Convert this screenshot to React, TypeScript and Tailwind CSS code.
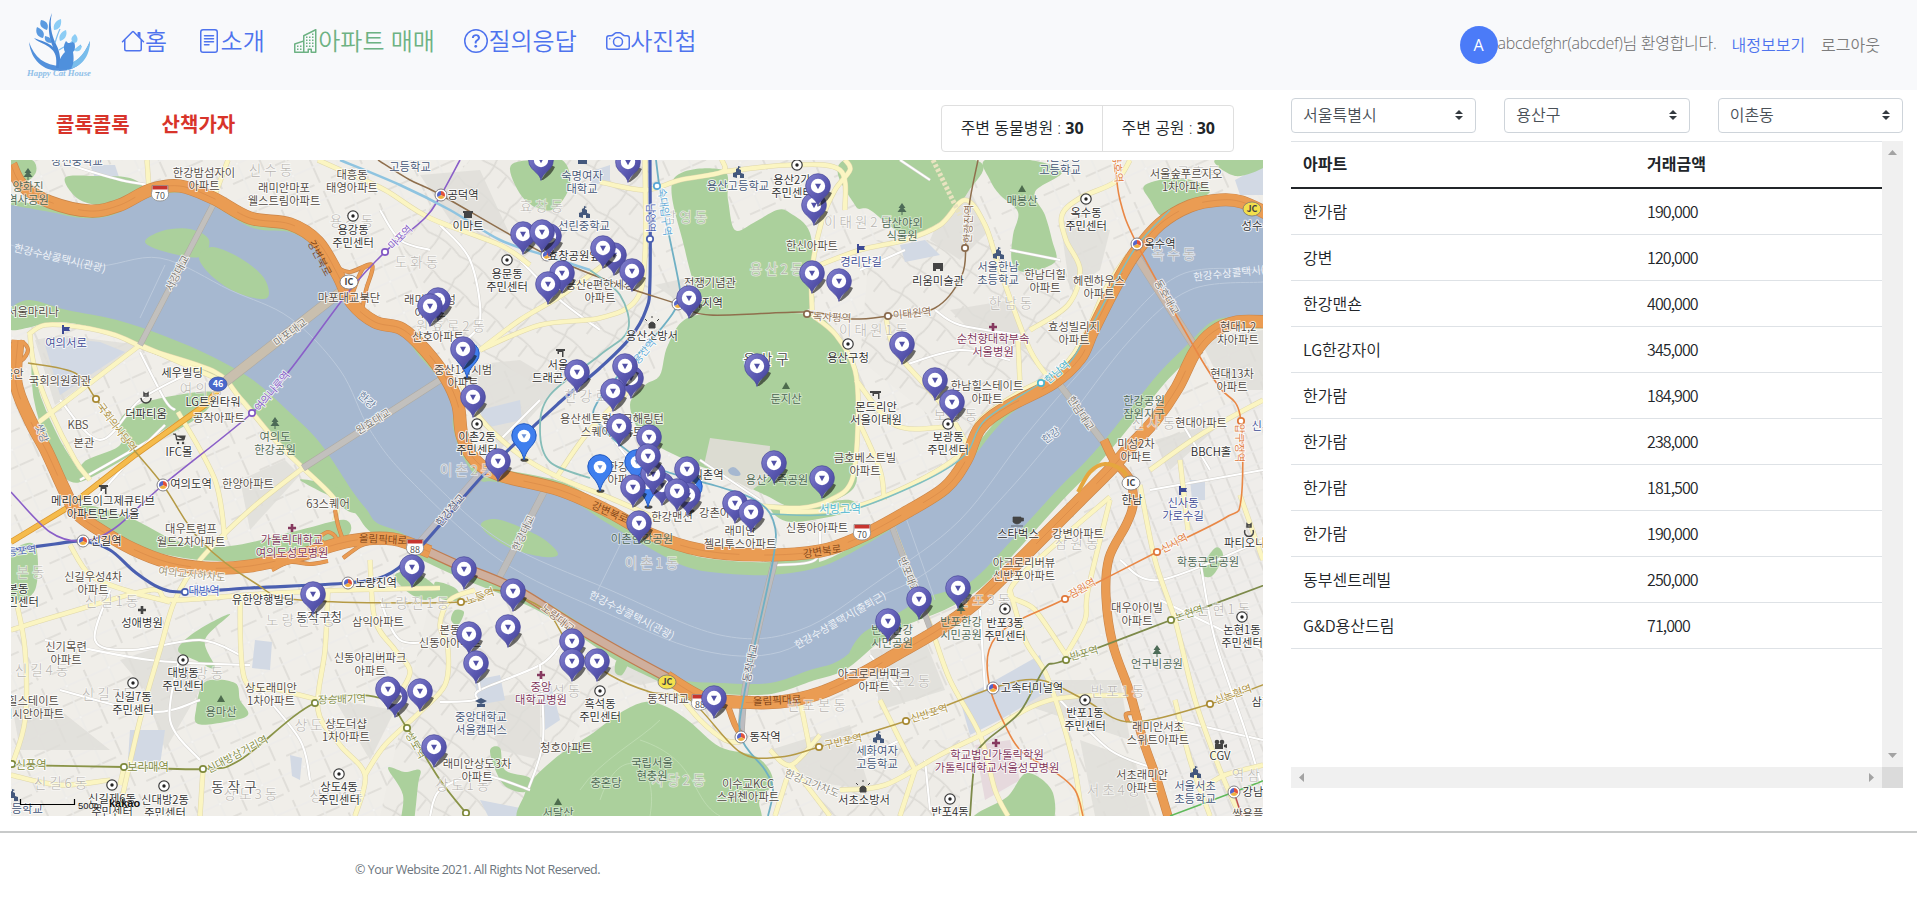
import React from "react";
import { BsFileText, BsQuestionCircle, BsCamera } from "react-icons/bs";

type Pt = [number, number];

const pts = (s: string): Pt[] => s.trim().split(/\s+/).map((p) => p.split(",").map(Number) as Pt);

// Catmull-Rom spline through the listed points
function curve(s: string, closed = false): string {
  const p = pts(s);
  const n = p.length;
  const at = (i: number): Pt => (closed ? p[(i + n) % n] : p[Math.max(0, Math.min(n - 1, i))]);
  let d = `M${p[0][0]},${p[0][1]}`;
  for (let i = 0; i < (closed ? n : n - 1); i++) {
    const [a, b, c, e] = [at(i - 1), at(i), at(i + 1), at(i + 2)];
    d += `C${(b[0] + (c[0] - a[0]) / 6).toFixed(1)},${(b[1] + (c[1] - a[1]) / 6).toFixed(1)} ${(c[0] - (e[0] - b[0]) / 6).toFixed(1)},${(c[1] - (e[1] - b[1]) / 6).toFixed(1)} ${c[0]},${c[1]}`;
  }
  return closed ? d + "Z" : d;
}

const NORTH_BANK =
  "11,205 50,212 83,218 113,215 150,197 187,193 213,205 253,228 293,233 320,253 337,283 353,310 373,327 400,333 420,357 440,380 453,403 453,427 463,457 480,480 497,482 560,495 607,523 653,550 687,567 720,573 770,575 820,567 860,548 907,519 950,492 973,458 1007,417 1047,390 1073,367 1093,337 1117,290 1137,257 1160,227 1193,207 1227,200 1270,217";
const SOUTH_BANK =
  "1270,318 1240,317 1213,321 1187,345 1160,372 1133,405 1107,437 1087,460 1060,487 1027,523 1000,553 973,580 940,600 907,613 873,633 840,660 810,670 770,683 720,683 680,680 660,670 620,650 580,623 547,603 513,587 470,570 427,550 400,532 377,523 367,510 353,492 320,443 287,410 253,380 213,357 167,337 117,320 67,310 30,300 11,307";

const GREENS = [
  "65,178 95,176 130,178 142,190 112,205 80,200",
  "11,160 32,160 36,172 25,182 12,175",
  "11,310 30,300 67,310 117,320 167,337 213,357 253,380 287,410 320,443 353,492 367,510 350,512 330,495 310,472 275,440 245,400 215,378 150,352 110,333 60,322 11,330",
  "146,402 212,392 200,416 140,450 80,482 84,462 120,445 120,420",
  "32,362 42,400 60,440 82,478 65,478 46,440 34,400",
  "80,505 130,518 180,542 230,546 300,530 345,520 345,538 290,556 200,560 120,540",
  "510,168 530,160 562,160 570,185 552,210 525,200",
  "690,317 750,314 807,314 830,325 852,360 858,400 856,450 852,490 800,508 765,495 725,475 690,462 645,437 630,405 645,385 660,375 668,345",
  "673,180 723,170 728,200 735,230 755,222 777,210 790,213 810,233 813,283 807,310 740,314 697,313 698,300 685,250",
  "845,160 975,160 968,192 940,222 905,234 870,210 855,205",
  "985,160 1030,160 1062,172 1035,192 1045,215 1052,240 1055,262 1025,272 1012,262 1013,235 1018,212 1000,195 990,180",
  "1145,185 1180,178 1210,190 1190,205 1165,218 1150,200",
  "1215,160 1263,160 1263,168 1235,176",
  "620,713 645,702 667,707 690,722 720,747 757,757 773,780 760,800 740,830 537,830 525,793 553,760 593,733",
  "490,752 500,748 505,770 530,778 525,792 503,784",
  "205,682 235,683 240,700 248,715 225,722 198,724 196,710",
  "230,614 205,640 215,668 195,660 178,650 195,632",
  "388,768 405,772 420,770 418,785 412,830 400,830 403,795",
  "1027,773 1053,793 1045,830 973,830 975,815 1007,797",
  "1215,548 1223,556 1212,576 1200,572",
  "435,582 455,588 460,600 440,598",
  "395,575 415,572 440,592 425,600 405,590",
  "455,610 464,612 458,625 451,620",
  "617,660 628,662 622,675 615,672",
  "770,506 800,505 850,500 848,512 790,522",
  "300,480 330,485 350,495 340,500",
  "1170,340 1185,345 1150,390 1140,395",
  "11,555 35,545 35,590 11,600",
];

const BLOCKS = [
  "470,365 520,360 545,375 560,385 500,450 475,400",
  "655,285 700,275 730,280 730,310 690,310",
  "35,340 60,335 140,345 55,405",
  "420,175 480,170 510,235 450,220",
  "855,560 880,560 870,600 860,600",
  "870,650 925,640 945,690 880,710",
  "1010,700 1050,680 1120,680 1130,740 1070,720",
  "1200,340 1263,330 1263,390 1225,390",
  "1155,440 1225,420 1170,470",
  "1080,740 1135,760 1150,816 1095,816",
  "240,480 285,460 300,475 250,530",
  "120,660 180,640 200,690 165,750 145,690",
  "335,700 395,710 370,760",
  "480,700 540,690 540,760 500,750",
  "960,170 990,230 960,260 930,240",
  "1060,220 1110,230 1100,270 1070,290",
  "950,310 1010,300 1030,350 980,340",
  "11,700 60,710 110,750 20,750",
  "770,750 850,725 870,790 800,780",
  "650,655 690,675 640,685 600,670",
  "700,355 740,335 720,345",
];

const WATERS = [
  "90,165 115,165 120,180 95,178",
  "595,170 610,165 610,182 590,185",
  "480,410 520,400 522,420 485,428",
  "900,245 925,240 940,255 905,262",
  "255,640 272,642 270,670 252,668",
  "130,730 165,730 160,765 128,760",
  "475,680 500,675 505,700 478,705",
  "1040,655 960,700 970,735 1000,720 1050,690",
  "540,690 550,680 560,720 545,730",
  "1190,480 1205,480 1205,500 1192,500",
  "290,755 302,758 300,780 292,776",
  "820,430 842,425 845,445 825,450",
  "1235,180 1263,165 1263,195 1240,195",
  "530,810 480,800 490,820 530,820",
  "690,290 697,288 697,300 692,302",
  "45,345 60,338 100,342 125,352 60,395",
];

const YELLOWS = [
  "147,160 149,190",
  "228,160 213,200",
  "318,160 345,172 385,190 430,218 500,245 530,265",
  "28,335 45,325 80,327 115,335 150,350 215,372 240,398 275,440 303,468",
  "30,335 34,365 50,410 75,460 90,480",
  "140,345 35,425",
  "140,345 170,358 220,380",
  "303,468 250,510 200,560 175,600 160,650 140,720 118,816",
  "178,412 215,480 225,540",
  "303,468 335,500 335,520",
  "11,630 60,615 150,590 172,600 260,594 350,590 440,588",
  "70,545 90,575 125,590 170,602",
  "240,598 245,680 280,690 320,700",
  "328,590 325,650 318,710 340,745 365,775 355,816",
  "365,775 385,745 420,712 445,685 448,650 440,625 450,600 475,590",
  "370,560 375,620 395,650 410,672 395,700",
  "16,600 25,650 25,720 12,765",
  "11,775 60,785 110,780",
  "203,769 200,816",
  "124,767 120,785",
  "480,350 540,325 600,318 636,300 645,255 645,160",
  "480,350 520,320 562,295 610,260",
  "600,182 645,190 680,180 722,172 722,160",
  "722,172 790,165 840,170 845,210",
  "812,310 812,270 822,220 835,190 850,170 845,160",
  "812,315 836,335 855,370 858,420 852,480 830,500 800,508 760,506",
  "812,268 860,250 905,240 940,225 965,200 985,225 1000,270 1030,350 1055,385",
  "1030,330 1068,305 1080,270 1066,240 1062,215 1080,198 1115,182 1130,160",
  "886,318 895,350 925,385 950,415 970,450",
  "856,380 895,425 945,427",
  "858,420 880,470 884,500",
  "1018,340 1020,385",
  "1128,255 1105,290 1085,335 1060,370 1020,392 980,420 965,450 920,480 850,508 780,512",
  "462,385 480,418 520,455 560,478 610,498 660,520",
  "556,478 590,430 640,380",
  "890,520 930,625 950,680 980,735 995,790 1008,816",
  "1010,590 1025,640 1045,672 1062,720 1075,770 1082,816",
  "1066,655 1085,620 1088,590 1110,500",
  "1066,655 1035,610 1010,590 1060,540 1110,497",
  "1140,485 1155,560 1175,620 1195,700 1220,770 1240,816",
  "1175,700 1190,760 1210,816",
  "840,790 885,785 940,755 985,733 1050,700 1130,695",
  "880,700 915,770",
  "1150,470 1200,435 1263,400",
  "1180,460 1188,530",
  "1240,495 1263,560",
  "791,765 830,816",
  "791,765 775,816",
  "770,750 791,765 820,735",
  "800,700 810,750",
  "675,690 700,720 725,740 741,742",
  "900,816 915,770",
  "1200,790 1225,775 1263,765",
];

const WHITES = [
  "70,165 130,182 200,190",
  "140,352 165,400 175,410",
  "80,480 150,440 190,415",
  "60,400 100,440 140,400 185,375",
  "95,500 130,460 165,425",
  "110,590 95,640 130,650 200,640 240,655",
  "45,640 150,660 250,665",
  "60,690 150,712 200,700",
  "180,655 170,720 200,760",
  "440,225 470,260 480,320 460,345",
  "520,260 560,300 600,330",
  "380,210 400,240 430,250",
  "600,420 640,470 700,500",
  "540,400 500,440",
  "900,160 930,180",
  "905,365 960,350 1010,360",
  "860,270 905,250",
  "935,310 960,325 1020,335",
  "1060,260 1010,250",
  "440,702 475,700 480,690 540,665 560,645",
  "480,690 475,660",
  "540,665 543,740 528,790",
  "430,816 440,790 480,775 530,790",
  "870,655 900,690",
  "930,810 925,760",
  "860,760 900,740",
  "1120,560 1160,580 1263,540",
  "1160,600 1263,650",
  "1150,490 1263,470",
  "1175,720 1263,740",
  "1060,700 1110,750 1160,770",
  "980,610 985,690",
  "1200,560 1215,640 1245,730 1263,790",
  "1180,420 1210,470",
  "775,565 815,560 820,530",
  "700,460 760,500",
  "380,600 400,640 440,640",
  "260,690 300,740 310,780",
];

const ORANGES = [
  { d: "11,165 22,185 50,202 90,211 120,205 150,190 180,186 213,198 250,218 290,224 318,242 338,275 352,303 375,322 402,329 425,350 446,378 458,405 462,435 475,460 500,475 560,490 610,512 650,534 700,550 760,555 820,551 860,537 905,513 945,488 966,460 980,428 1007,407 1053,383 1080,358 1093,330 1117,283 1135,253 1160,224 1190,206 1220,200 1242,202 1270,215", w: 12 },
  { d: "18,340 16,383 30,420 47,452 63,487 77,513 100,530 133,549 167,562 205,568 250,566 300,555 350,541 393,539 430,552", w: 12 },
  { d: "667,677 703,698 737,702 780,702 820,693 860,675 895,655 935,632 973,605 1013,567 1047,533 1080,500 1110,470 1130,447 1155,420 1177,388 1195,352 1213,332 1237,322 1270,322", w: 12 },
  { d: "1104,440 1114,460 1130,480 1133,505 1126,525 1109,558 1106,597 1113,645 1130,693 1143,740 1157,780 1172,830", w: 8 },
  { d: "728,706 735,725 741,735", w: 5 },
  { d: "335,510 338,525 343,540", w: 3 },
  { d: "11,345 22,342 28,350 22,360 11,362", w: 3 },
  { d: "352,295 362,270 372,265", w: 3 },
  { d: "338,268 350,272 372,265 366,290 362,310", w: 3 },
  { d: "318,538 328,532 336,538 330,546 320,540", w: 3 },
  { d: "272,570 290,562 310,564 328,561", w: 3 },
  { d: "343,558 360,546 372,542", w: 3 },
  { d: "1128,722 1126,714 1138,714 1140,724", w: 3 },
];

const BRIDGES = [
  { d: "213,205 140,345", w: 5, c: "#c2c0bd" },
  { d: "343,290 225,382", w: 9, c: "#c9bfae" },
  { d: "440,380 303,468", w: 6, c: "#c2c0bd" },
  { d: "547,486 498,580", w: 6, c: "#bdbcbb" },
  { d: "775,560 760,620 745,690 741,735", w: 6, c: "#bcbcc0" },
  { d: "889,519 930,628", w: 5, c: "#bdbcbb" },
  { d: "1060,385 1107,447", w: 6, c: "#bfbdb9" },
  { d: "1137,257 1200,355", w: 7, c: "#c9b8aa" },
  { d: "410,555 488,466", w: 8, c: "#bcbcc4" },
];

const LINES = [
  { c: "#4a5fb0", w: 3.2, d: "11,550 55,544 83,541 110,550 135,572 160,588 185,592 250,588 348,583 385,576 412,556 440,525 490,468 560,402 600,368 630,338 646,310 650,280 650,160" },
  { c: "#8a5fc8", w: 1.6, d: "460,160 441,195 425,218 385,252 350,290 290,370 252,413 163,485 115,528 83,541 50,532 11,492" },
  { c: "#8f6f4d", w: 1.5, d: "378,160 410,180 441,195 547,255 620,285 678,304 710,315 807,312 850,319 888,316 935,308 962,275 966,240 970,200 978,160" },
  { c: "#6fb0c4", w: 1.8, d: "656,160 660,190 668,230 680,290 678,304 660,330 600,398 600,425 650,465 720,487 755,500 773,520 773,560 745,690 741,737 765,770 773,790 768,816" },
  { c: "#8fc4e0", w: 2.5, d: "340,160 400,185 450,210 500,240 547,256 590,270" },
  { c: "#86bdb8", w: 1.8, d: "590,270 620,295 628,330 600,355 550,395 540,430 550,462 590,478" },
  { c: "#7fbfc0", w: 1.5, d: "770,514 840,513 920,483 965,455 985,420 1041,383 1070,362 1092,325 1134,250 1170,210" },
  { c: "#e98745", w: 1.6, d: "1115,160 1120,200 1137,244 1197,352 1220,388 1240,415 1241,500 1225,518 1157,552 1065,599 1010,625 989,650 990,688 1005,725 1022,752 1055,772 1075,790 1083,816" },
  { c: "#b59a45", w: 1.5, d: "28,363 75,373 96,399 130,445 163,485 200,540 255,583 300,600 461,602 495,590 545,610 570,645 610,675 650,692 690,700 740,752 780,757 819,747 906,721 993,688 1040,680 1085,700 1130,722 1210,704 1270,682" },
  { c: "#8a9448", w: 1.8, d: "11,765 124,767 203,769 240,760 315,703 380,698 407,728 440,780 466,813" },
  { c: "#7d8a4a", w: 1.8, d: "970,816 975,760 985,742 1020,712 1045,668 1066,660 1171,620 1270,583" },
  { c: "#5fb95a", w: 1.5, d: "1170,816 1234,792 1270,778" },
  { c: "#c0504c", w: 1.5, d: "1234,792 1243,820" },
];

type Kind = "n" | "b" | "g" | "s" | "h" | "w" | "f" | "o";
// x, y, text, kind, rotation, colour
type Label = [number, number, string, Kind?, number?, string?];

const DISTRICTS: [number, number, string][] = [
  [272, 170, "신수동"], [353, 221, "용강동"], [418, 262, "도화동"], [203, 389, "여의동"], [543, 206, "효창동"],
  [687, 217, "남영동"], [860, 222, "이태원2동"], [778, 269, "용산2동"], [452, 326, "원효로2동"], [468, 470, "이촌2동"],
  [1175, 254, "옥수동"], [1012, 303, "한남동"], [875, 330, "이태원1동"], [957, 415, "보광동"], [1155, 423, "신사동"],
  [113, 601, "신길1동"], [302, 620, "노량진2동"], [416, 603, "노량진1동"], [43, 670, "신길4동"], [110, 694, "신길7동"],
  [203, 673, "대방동"], [62, 783, "신길6동"], [252, 794, "상도3동"], [653, 563, "이촌1동"], [560, 691, "흑석동"],
  [818, 705, "반포본동"], [680, 780, "사당2동"], [985, 600, "반포3동"], [905, 681, "반포2동"], [1119, 691, "반포1동"],
  [1078, 543, "잠원동"], [1115, 790, "서초4동"], [1225, 609, "논현1동"], [1255, 775, "역삼동"], [595, 396, "한강로동"],
  [1200, 172, "금호동"], [464, 785, "상도1동"], [32, 572, "본동"], [318, 725, "상도동"], [338, 796, "상도4동"],
];

const LABELS: Label[] = [
  [77, 161, "창전중학교", "s"], [28, 187, "양화진|역사공원", "g"], [204, 173, "한강밤섬자이|아파트"], [284, 188, "래미안마포|웰스트림아파트"],
  [352, 175, "대흥동|태영아파트"], [410, 167, "고등학교", "s"], [353, 230, "용강동|주민센터", "b"], [349, 298, "마포대교북단"],
  [33, 312, "서울마리나"], [66, 343, "여의서로", "f"], [438, 337, "산호아파트"], [60, 381, "국회의원회관"], [182, 373, "세우빌딩", "b"],
  [213, 402, "LG트윈타워", "b"], [219, 418, "공작아파트"], [146, 414, "더파티움", "b"], [78, 425, "KBS"], [84, 443, "본관"],
  [179, 452, "IFC몰", "b"], [275, 437, "여의도|한강공원", "g"], [248, 484, "한양아파트"], [191, 484, "여의도역", "b"], [8, 374, "서울안"],
  [60, 258, "한강수상콜택시(관광)", "w", 13], [177, 273, "서강대교", "n", -62, "#77736d"], [290, 332, "마포대교", "n", -37, "#77736d"],
  [373, 421, "원효대교", "n", -32, "#77736d"], [367, 400, "한강", "n", 42, "#5f7898"], [320, 258, "강변북로", "o", 62],
  [400, 237, "마포역", "n", -45, "#8258c4"], [272, 391, "여의나루역", "b", -50, "#8258c4"], [117, 427, "국회의사당역", "n", 53, "#a88a35"],
  [42, 433, "샛강", "n", 68, "#5f7898"],
  [463, 195, "공덕역", "b"], [468, 226, "이마트", "b"], [582, 176, "숙명여자|대학교", "s"], [584, 226, "선린중학교", "s"],
  [651, 218, "남영역", "b", 90, "#4a5fb0"], [665, 212, "숙대입구역", "n", 83, "#58a6d6"], [738, 186, "용산고등학교", "s"],
  [792, 180, "용산2가|주민센터", "b"], [812, 246, "한신아파트"], [861, 262, "경리단길", "f"], [507, 274, "용문동|주민센터", "b"],
  [579, 256, "효창공원앞역", "b"], [600, 285, "용산e편한세상|아파트"], [710, 283, "전쟁기념관"], [702, 303, "삼각지역", "b"],
  [832, 317, "녹사평역", "n", 3, "#8a6b4e"], [652, 336, "용산소방서", "b"], [848, 358, "용산구청", "b"], [786, 399, "둔지산", "g"],
  [430, 300, "래미안삼성|아파트"], [463, 370, "중산1차시범|아파트"], [558, 365, "서울|드래곤시티", "b"], [612, 419, "용산센트럴파크해링턴|스퀘어아파트"],
  [477, 437, "이촌2동|주민센터", "b"], [623, 467, "한강로|아파트"], [708, 475, "이촌역", "b"], [777, 480, "용산가족공원", "g"],
  [865, 458, "금호베스트빌|아파트"], [876, 407, "몬드리안|서울이태원", "b"], [641, 355, "신용산역", "n", -50, "#58a6d6"],
  [1060, 157, "서울방송|고등학교", "s"], [1186, 174, "서울숲푸르지오|1차아파트"], [1022, 201, "매봉산", "g"], [1086, 213, "옥수동|주민센터", "b"],
  [1252, 226, "성수", "b"], [902, 223, "남산야외|식물원", "g"], [968, 224, "한강진역", "n", -88, "#8a6b4e"], [938, 281, "리움미술관", "b"],
  [998, 267, "서울한남|초등학교", "s"], [1045, 275, "한남더힐|아파트"], [1099, 281, "헤렌하우스|아파트"], [1160, 244, "옥수역", "b"],
  [1240, 272, "한강수상콜택시(관광)", "w", -6], [1167, 297, "동호대교", "n", 60, "#77736d"], [912, 313, "이태원역", "n", -6, "#8a6b4e"],
  [993, 339, "순천향대학부속|서울병원", "h"], [1074, 327, "효성빌리지|아파트"], [1238, 327, "현대1,2|차아파트"], [1057, 372, "한남역", "b", -40, "#3fb0cc"],
  [987, 386, "한남힐스테이트|아파트"], [1232, 374, "현대13차|아파트"], [1081, 413, "한남대교", "n", 56, "#77736d"], [1051, 435, "한강", "n", -36, "#5f7898"],
  [1144, 401, "한강공원|잠원지구", "g"], [948, 437, "보광동|주민센터", "b"], [1201, 423, "현대아파트"], [1136, 444, "미성2차|아파트"],
  [1211, 452, "BBCH홀", "b"], [1240, 443, "압구정역", "n", 90, "#e0783a"], [1118, 168, "금호역", "n", 85, "#e0783a"],
  [103, 501, "메리어트이그제큐티브|아파트먼트서울", "b"], [106, 541, "신길역", "b"], [17, 551, "영등포역", "n", -6, "#4a5fb0"],
  [191, 529, "대우트럼프|월드2차아파트"], [328, 504, "63스퀘어"], [292, 540, "가톨릭대학교|여의도성모병원", "h"], [383, 539, "올림픽대로", "o", 3],
  [93, 577, "신길우성4차|아파트"], [192, 574, "여의교지하차도", "n", 6, "#9a8f70"], [18, 589, "본동|주민센터", "b"], [204, 591, "대방역", "b", 0, "#3f5cc0"],
  [376, 583, "노량진역", "b"], [263, 600, "유한양행빌딩", "b"], [378, 622, "삼익아파트"], [142, 623, "성애병원", "b"],
  [66, 647, "신기목련|아파트"], [183, 673, "대방동|주민센터", "b"], [133, 697, "신길7동|주민센터", "b"], [33, 701, "힐스테이트|래시안아파트"],
  [370, 658, "신동아리버파크|아파트"], [271, 688, "상도래미안|1차아파트"], [221, 712, "용마산", "g"], [342, 699, "장승배기역", "n", -2, "#7f8a3c"],
  [346, 724, "상도더샵|1차아파트"], [237, 754, "신대방삼거리역", "n", -28, "#7f8a3c"], [148, 767, "보라매역", "n", 0, "#7f8a3c"],
  [31, 765, "신풍역", "n", 0, "#7f8a3c"], [416, 745, "상도역", "n", 60, "#7f8a3c"], [112, 799, "신길제6동|주민센터", "b"],
  [165, 800, "신대방2동|주민센터", "b"], [339, 787, "상도4동|주민센터", "b"], [22, 809, "초등학교", "s"],
  [610, 512, "강변북로", "o", 24], [672, 517, "한강맨션"], [642, 539, "이촌한강공원", "g"], [740, 531, "래미안|첼리투스아파트"],
  [817, 528, "신동아아파트"], [840, 509, "서빙고역", "n", 0, "#4bb6d0"], [822, 551, "강변북로", "o", -8], [725, 513, "강촌아파트"],
  [523, 533, "한강대교", "n", -65, "#77736d"], [558, 618, "노량대교", "n", 38, "#8a6f5a"], [480, 596, "노들역", "n", -20, "#a88a35"],
  [450, 630, "본동|신동아아파트"], [632, 615, "한강수상콜택시(관광)", "w", 27], [840, 620, "한강수상콜택시(출퇴근)", "w", -30],
  [750, 663, "동작대교", "n", -78, "#66646e"], [668, 699, "동작대교"], [541, 687, "중앙|대학교병원", "h"], [600, 704, "흑석동|주민센터", "b"],
  [777, 700, "올림픽대로", "o", -3], [481, 717, "중앙대학교|서울캠퍼스", "s"], [765, 737, "동작역", "b"], [843, 741, "구반포역", "n", -12, "#a88a35"],
  [566, 748, "청호아파트"], [477, 764, "래미안상도3차|아파트"], [652, 763, "국립서울|현충원", "g"], [606, 783, "충혼당", "g"],
  [748, 784, "이수교KCC|스위첸아파트"], [558, 813, "서달산", "g"], [864, 800, "서초소방서", "b"], [812, 783, "한강고가차도", "n", 22, "#8d8a80"],
  [450, 510, "한강철교", "n", -50, "#55586e"],
  [1018, 534, "스타벅스", "b"], [1078, 534, "강변아파트"], [1024, 563, "아크로리버뷰|신반포아파트"], [1132, 500, "한남", "b"],
  [1183, 503, "신사동|가로수길", "f"], [1250, 543, "파티오나인", "b"], [1174, 543, "신사역", "n", -27, "#e0783a"], [1082, 588, "잠원역", "n", -30, "#e0783a"],
  [1208, 562, "학동근린공원", "g"], [909, 575, "반포대교", "n", 68, "#77736d"], [892, 630, "반포한강|시민공원", "g"], [961, 622, "반포한강|시민공원", "g"],
  [1005, 623, "반포3동|주민센터", "b"], [1137, 608, "대우아이빌|아파트"], [1189, 613, "논현역", "n", -18, "#7f8a3c"], [1242, 630, "논현1동|주민센터", "b"],
  [1157, 664, "언구비공원", "g"], [1084, 653, "반포역", "n", -15, "#7f8a3c"], [874, 674, "아크로리버파크|아파트"], [1032, 688, "고속터미널역", "b"],
  [1085, 713, "반포1동|주민센터", "b"], [929, 713, "신반포역", "n", -17, "#a88a35"], [1233, 694, "신논현역", "n", -20, "#a88a35"],
  [1158, 727, "래미안서초|스위트아파트"], [877, 751, "세화여자|고등학교", "s"], [997, 755, "학교법인가톨릭학원|가톨릭대학교서울성모병원", "h"],
  [1220, 756, "CGV", "b"], [1142, 775, "서초래미안|아파트"], [1195, 786, "서울서초|초등학교", "s"], [1253, 792, "강남", "b"],
  [950, 812, "반포4동", "b"], [1253, 814, "쌍용플래", "n"], [1262, 702, "삼정", "b"], [1262, 426, "신사", "f"],
];

const KIND_COLOR: Record<Kind, string> = {
  n: "#4f4740", b: "#2b2b2b", g: "#4b6552", s: "#3f5274", h: "#7c3157", w: "#f4f7fb", f: "#3d4a96", o: "#7d4216",
};

const TARGETS = "353,216 797,165 507,260 848,344 477,424 1086,199 948,424 183,660 133,683 112,785 164,786 339,774 600,691 1005,609 1242,617 1085,700 950,799";
const STATIONS = "441,195 547,255 678,304 163,485 83,541 348,583 741,737 1137,244 993,688 1234,792";
const DOTS: [number, number, string][] = [
  [385, 252, "#8258c4"], [252, 413, "#8258c4"], [96, 399, "#a88a35"], [650, 239, "#4a5fb0"], [657, 186, "#58a6d6"], [807, 314, "#8a6b4e"],
  [888, 316, "#8a6b4e"], [965, 248, "#8a6b4e"], [1041, 383, "#4bb6d0"], [1241, 421, "#e0783a"], [1157, 552, "#e0783a"], [1065, 599, "#e0783a"],
  [185, 592, "#4a5fb0"], [461, 602, "#a88a35"], [315, 703, "#7f8a3c"], [124, 767, "#7f8a3c"], [203, 769, "#7f8a3c"], [407, 728, "#7f8a3c"],
  [466, 813, "#7f8a3c"], [12, 764, "#7f8a3c"], [819, 747, "#a88a35"], [906, 721, "#a88a35"], [1210, 704, "#a88a35"], [1171, 620, "#7f8a3c"], [1066, 660, "#7f8a3c"],
];

const PURPLE_PINS =
  "541,160 628,162 814,205 818,186 549,236 523,234 542,232 614,255 603,248 632,271 562,273 548,284 812,273 839,281 689,298 438,300 430,306 577,372 631,378 625,366 613,391 757,366 473,397 619,426 662,485 653,474 649,437 648,456 498,461 687,469 774,463 822,478 633,487 688,495 677,491 639,523 735,503 751,512 464,569 513,591 508,627 469,634 476,663 572,641 572,661 597,661 714,698 434,747 902,344 935,380 952,402 412,567 313,594 395,697 388,689 420,691 919,599 888,621 958,588";
const BLUE_PINS = "467,354 524,436 600,467 637,462 648,483 690,487";

function Pin({ x, y }: { x: number; y: number }) {
  return (
    <g transform={`translate(${x} ${y})`}>
      <path d="M0 20 L10 5 L14 7 C12 12 8 16 2 20Z" fill="#111" opacity="0.600" />
      <path d="M0 20.500 C-1 15 -5 13 -9.300 8.300 A12.400 12.400 0 1 1 9.300 8.300 C5 13 1 15 0 20.500Z" fill="url(#pin)" stroke="#47479a" strokeWidth="0.700" />
      <circle r="7.200" fill="#fff" />
      <path d="M-3 -2.300H3L0 3.200Z" fill="#5150a6" />
    </g>
  );
}

function BluePin({ x, y }: { x: number; y: number }) {
  return (
    <g transform={`translate(${x} ${y})`}>
      <ellipse cx="0.500" cy="24" rx="4" ry="1.800" fill="#111" opacity="0.750" />
      <path d="M0 24 C-2 15 -6 12 -9.500 7.500 A12.200 12.200 0 1 1 9.500 7.500 C6 12 2 15 0 24Z" fill="#3f7fee" stroke="#1f58c0" strokeWidth="1" />
      <circle r="6.300" fill="#fff" />
      <path d="M-2.500 -1.800H2.500L0 2.500Z" fill="#6f93d6" />
    </g>
  );
}

function MapText({ label }: { label: Label }) {
  const [x, y, text, kind = "n", rot = 0, color] = label;
  const size = rot !== 0 ? 10.5 : 11.3;
  return (
    <text
      transform={`translate(${x} ${y}) rotate(${rot})`}
      textAnchor="middle"
      fontSize={size}
      fill={color ?? KIND_COLOR[kind]}
      stroke={kind === "w" || kind === "o" ? "none" : "#fff"}
      strokeOpacity={kind === "g" ? 0.45 : 0.8}
      strokeWidth="2"
      strokeLinejoin="round"
      paintOrder="stroke"
    >
      {text.split("|").map((l, i) => (
        <tspan key={i} x="0" y={4 + i * 13}>{l}</tspan>
      ))}
    </text>
  );
}

function Shield({ x, y, n }: { x: number; y: number; n: string }) {
  return (
    <g transform={`translate(${x} ${y})`}>
      <path d="M-8 -7.500H8V-2C10 3 7 8 0 8S-10 3 -8 -2Z" fill="#fff" stroke="#8a8a8a" strokeWidth="0.800" />
      <path d="M-7.500 -7.200H7.500V-3.500H-7.500Z" fill="#c7352f" />
      <text y="5.500" textAnchor="middle" fontSize="9" fill="#444">{n}</text>
    </g>
  );
}

function Badge({ x, y, t, fill, color = "#444", stroke = "#777" }: { x: number; y: number; t: string; fill: string; color?: string; stroke?: string }) {
  return (
    <g transform={`translate(${x} ${y})`}>
      <ellipse rx="9" ry="7" fill={fill} stroke={stroke} strokeWidth="0.800" />
      <text y="3.200" textAnchor="middle" fontSize="9" fontWeight="700" fill={color}>{t}</text>
    </g>
  );
}

const TREES = "28,174 275,423 902,209 1157,651 961,608";
const HILLS = "786,386 1022,189 221,699 558,802";
const CROSSES: [number, number, string][] = [[993, 327, "#86395f"], [292, 528, "#86395f"], [541, 675, "#86395f"], [996, 743, "#86395f"], [142, 610, "#444"]];
const SCHOOLS = "584,213 738,173 998,254 878,738 1195,773 12,796";
const FLAGS = "66,329 861,248 1183,490";

function CityMap() {
  const river = `${curve(NORTH_BANK)}L1270,318${curve(SOUTH_BANK).replace(/^M[^C]*/, "")}L11,205Z`;
  return (
    <svg viewBox="11 160 1252 656" className="block h-[656px] w-full" fontFamily='"Noto Sans CJK KR", "Noto Sans", sans-serif'>
      <defs>
        <pattern id="streetsA" width="46" height="34" patternUnits="userSpaceOnUse" patternTransform="rotate(-24)">
          <rect width="46" height="34" fill="#f0eee9" />
          <path d="M0 8H46M0 25H28M12 0V34M34 0V25" stroke="#dddbd6" strokeWidth="1.600" fill="none" />
          <path d="M0 8H46M12 0V34" stroke="#fdfdfc" strokeWidth="0.900" fill="none" />
        </pattern>
        <pattern id="streetsB" width="17" height="13" patternUnits="userSpaceOnUse" patternTransform="rotate(-22)">
          <rect width="17" height="13" fill="#efedea" />
          <path d="M0 4H17M6 0V13" stroke="#d9d7d3" strokeWidth="1.400" fill="none" />
          <path d="M0 4H17" stroke="#fff" strokeWidth="0.800" fill="none" />
        </pattern>
        <pattern id="streetsC" width="40" height="30" patternUnits="userSpaceOnUse" patternTransform="rotate(38)">
          <rect width="40" height="30" fill="#eeece7" />
          <path d="M0 9Q20 3 40 9M10 0Q15 15 10 30M28 8V22" stroke="#dbd9d4" strokeWidth="1.500" fill="none" />
        </pattern>
        <linearGradient id="pin" x1="0" y1="0" x2="1" y2="1">
          <stop offset="0" stopColor="#8583cf" />
          <stop offset="0.550" stopColor="#5b59b2" />
          <stop offset="1" stopColor="#403f92" />
        </linearGradient>
      </defs>
      <rect x="11" y="160" width="1252" height="656" fill="url(#streetsA)" />
      <path d="M1110 480L1263 380V816H1180L1110 600Z" fill="url(#streetsB)" />
      <path d="M470 160H650V330L560 400L480 350L440 330L400 240ZM870 240H1060V380L960 440L860 360Z" fill="url(#streetsC)" />
      <path d="M430 600L600 680L540 816H380ZM820 740H960V816H820Z" fill="url(#streetsC)" />
      {BLOCKS.map((b, i) => <polygon key={i} points={b} fill="#dfddd8" opacity="0.800" />)}
      {WATERS.map((b, i) => <polygon key={i} points={b} fill="#d2d9e4" />)}
      <path d="M975 745L1010 740L1020 780L985 800Z" fill="#e6d9dd" />
      <path d={curve(NORTH_BANK)} fill="none" stroke="#abd09c" strokeWidth="10" />
      <path d={curve("480,480 497,482 560,495 607,523 653,550 687,567 720,573 770,575 820,567")} fill="none" stroke="#abd09c" strokeWidth="26" />
      <path d={curve(SOUTH_BANK)} fill="none" stroke="#abd09c" strokeWidth="22" />
      {GREENS.map((g, i) => <path key={i} d={curve(g, true)} fill="#abd09c" />)}
      <polygon points="710,438 770,446 768,478 752,490 704,465" fill="#dcdcd2" />
      <path d="M728 470q5-6 10 0q6 6-2 6q-8-1-8-6Z" fill="#a6b8d0" />
      <path d={river} fill="#a6b8d0" />
      <g fill="#abd09c">
        <path d={curve("145,242 162,231 190,229 209,240 200,257 166,252", true)} />
        <path d={curve("212,247 240,258 264,278 267,298 240,294 214,278 199,258", true)} />
        <path d={curve("481,524 495,519 520,527 545,540 558,554 545,557 515,550 490,536", true)} />
        <path d={curve("862,634 890,618 925,598 958,590 960,598 920,615 880,635 850,655", true)} />
      </g>
      <g fill="none" stroke="#bccadc" strokeWidth="1">
        <path d={curve("11,245 90,266 160,258 230,290 290,318 340,370 370,430 410,480 500,560 600,610 700,650 780,652 850,610 930,570 1000,500 1060,430 1130,340 1190,290 1263,282")} />
        <path d={curve("420,470 500,540 610,590 720,635 800,630 880,580 960,520 1030,430 1110,340 1180,275 1263,270")} />
        <path d="M620 545L598 590M905 515L935 600M165 265L140 318" />
      </g>
      <g fill="none" stroke="#c8e2bc" strokeWidth="0.900" opacity="0.700">
        <path d="M600 800C620 740 660 760 650 816M640 740C700 760 690 800 720 816M580 790C600 760 640 740 660 720" />
      </g>

      {WHITES.map((w, i) => (
        <g key={i} fill="none">
          <path d={curve(w)} stroke="#d3d1cc" strokeWidth="3" />
          <path d={curve(w)} stroke="#fff" strokeWidth="2.100" />
        </g>
      ))}
      {YELLOWS.map((w, i) => <path key={i} d={curve(w)} fill="none" stroke="#dfd7ac" strokeWidth="5.200" />)}
      {YELLOWS.map((w, i) => <path key={i} d={curve(w)} fill="none" stroke="#fbf5c2" strokeWidth="4.200" />)}
      <path d="M933 160L960 215" stroke="#e9e3c0" strokeWidth="5" strokeDasharray="3 2" />
      <path d="M11 542L67 508L135 455L205 405L225 382" fill="none" stroke="#d9962f" strokeWidth="6" />
      <path d="M11 542L67 508L135 455L205 405L225 382" fill="none" stroke="#f5bb4c" strokeWidth="4.500" />

      {BRIDGES.map((b, i) => (
        <g key={i} fill="none">
          <path d={curve(b.d)} stroke="#aeaaa2" strokeWidth={b.w + 1} />
          <path d={curve(b.d)} stroke={b.c} strokeWidth={b.w} />
        </g>
      ))}
      <path d={curve("427,551 460,566 513,588 573,625 620,652 668,678")} fill="none" stroke="#c07c50" strokeWidth="10" />
      <path d={curve("427,551 460,566 513,588 573,625 620,652 668,678")} fill="none" stroke="#cfaf9d" strokeWidth="7.500" />
      {ORANGES.map((o, i) => <path key={i} d={curve(o.d)} fill="none" stroke="#c9854a" strokeWidth={o.w + 1.2} />)}
      {ORANGES.map((o, i) => <path key={i} d={curve(o.d)} fill="none" stroke="#ea9c53" strokeWidth={o.w} />)}
      {ORANGES.filter((o) => o.w > 10).map((o, i) => <path key={i} d={curve(o.d)} fill="none" stroke="#d98a48" strokeWidth="0.700" strokeDasharray="60 25" />)}
      <path d={curve("1078,492 1090,472 1105,464 1122,470 1130,482")} fill="none" stroke="#e5a63e" strokeWidth="4" />

      {LINES.map((l, i) => <path key={i} d={curve(l.d)} fill="none" stroke={l.c} strokeWidth={l.w} />)}

      <g fill="#b7b4af" stroke="#fff" strokeOpacity="0.600" strokeWidth="1.600" paintOrder="stroke" fontSize="13.500" fontWeight="300">
        {DISTRICTS.map(([x, y, t]) => (
          <text key={t + x} x={x} y={y + 5} textAnchor="middle" letterSpacing="3">{t}</text>
        ))}
      </g>

      {DOTS.map(([x, y, c], i) => <circle key={i} cx={x} cy={y} r="3.200" fill="#fff" stroke={c} strokeWidth="1.700" />)}
      {pts(STATIONS).map(([x, y], i) => (
        <g key={i}>
          <circle cx={x} cy={y} r="6" fill="#fff" stroke="#77757a" strokeWidth="0.900" />
          <path d={`M${x} ${y}V${y - 4}A4 4 0 0 1 ${x + 3.5} ${y + 2}Z`} fill="#e0523c" />
          <path d={`M${x} ${y}L${x + 3.5} ${y + 2}A4 4 0 0 1 ${x - 3.5} ${y + 2}Z`} fill="#f0b040" />
          <path d={`M${x} ${y}L${x - 3.5} ${y + 2}A4 4 0 0 1 ${x} ${y - 4}Z`} fill="#5565c8" />
        </g>
      ))}
      {pts(TARGETS).map(([x, y], i) => (
        <g key={i}>
          <circle cx={x} cy={y} r="5.200" fill="#fff" stroke="#3a3a3a" strokeWidth="1.200" />
          <circle cx={x} cy={y} r="1.700" fill="#222" />
        </g>
      ))}
      {pts(TREES).map(([x, y], i) => <path key={i} d={`M${x} ${y - 6}l3.500 5h-2l3 4h-4v3h-1v-3h-4l3-4h-2Z`} fill="#4d6b57" />)}
      {pts(HILLS).map(([x, y], i) => <path key={i} d={`M${x} ${y - 4}l4 7h-8Z`} fill="#4d6b4d" />)}
      {CROSSES.map(([x, y, c], i) => <path key={i} d={`M${x - 1.3} ${y - 4}h2.600v2.700h2.700v2.600h-2.700v2.700h-2.600v-2.700h-2.700v-2.600h2.700Z`} fill={c} />)}
      {pts(SCHOOLS).map(([x, y], i) => <path key={i} d={`M${x - 5} ${y + 4}v-4l3-1v-3l2-1v-2l3 1-2 1v1l2 1v3l3 1v4h-4v-3h-3v3Z`} fill="#44587c" />)}
      {pts(FLAGS).map(([x, y], i) => <path key={i} d={`M${x - 4} ${y - 4}h2v2h6l-1 2 1 2h-6v3h-2Z`} fill="#3d4a96" />)}
      <g fill="#444">
        <path d="M141 398a5 5 0 1 0 10 0M144 393q2 2 4 0v3h-4Z" stroke="#444" fill="none" strokeWidth="1.500" />
        <path d="M173 434h2.500l1.500 6h7M176 436h9l-1 3.500h-7.500Z" stroke="#444" strokeWidth="1.200" />
        <circle cx="178" cy="443" r="1.200" /><circle cx="183" cy="443" r="1.200" />
        <path d="M463 211h10v2h-1v5h-8v-5h-1ZM99 485h9v2h-1.500v7h-1.500v-5h-3v2h-1.500v-4h-1.500ZM556 349h9v2h-1.500v6h-1.500v-5h-3v2h-1.500v-3h-1.500ZM870 391h11v2h-1.500v6h-1.500v-5h-4v2h-1.500v-3h-2.500Z" />
        <path d="M933 263h10v8h-3v-2h-4v2h-3Z" />
        <path d="M649 328v-4q3-4 6 0v4ZM652 316v2M645 319l2 2M659 319l-2 2M860 792v-4q3-4 6 0v4ZM863 780v2M856 783l2 2M870 783l-2 2" stroke="#444" />
        <path d="M1013 517h8v5q-4 4-8 0ZM1021 518h2.500v3h-2.500M1011 526h12" stroke="#444" strokeWidth="0.700" />
        <circle cx="1217" cy="742" r="2.300" /><circle cx="1222" cy="742" r="2.300" /><path d="M1215 744h8v5h-8ZM1224 745l3-1v4l-3-1Z" />
        <path d="M1245 530a4.500 4.500 0 1 0 8 0M1247 524q2 2 4 0v3h-4Z" stroke="#444" fill="none" strokeWidth="1.500" />
      </g>
      <path d="M578 160h9v4h-9ZM475 701l6-3 6 3-6 3ZM477 704v3h8v-3" fill="#44587c" />
      <Shield x={160} y={193} n="70" />
      <Shield x={415} y={547} n="88" />
      <Shield x={862} y={532} n="70" />
      <Shield x={700} y={702} n="88" />

      {LABELS.map((l, i) => <MapText key={i} label={l} />)}
      <Badge x={218} y={384} t="46" fill="#4a68cc" color="#fff" stroke="#3a54ac" />
      <Badge x={349} y={282} t="IC" fill="#fff" />
      <Badge x={1131} y={483} t="IC" fill="#fff" />
      <Badge x={1252} y={209} t="JC" fill="#f3e04c" />
      <Badge x={667} y={682} t="JC" fill="#f3e04c" />
      <g textAnchor="middle" fontSize="13.500" fill="#444" stroke="#fff" strokeWidth="2.200" paintOrder="stroke">
        <text x="768" y="364" letterSpacing="4">용산구</text>
        <text x="236" y="792" letterSpacing="4">동작구</text>
        <text x="319" y="622" fontSize="12.500">동작구청</text>
      </g>

      {pts(BLUE_PINS).map(([x, y], i) => <BluePin key={i} x={x} y={y} />)}
      <Pin x={463} y={349} />
      {pts(PURPLE_PINS).map(([x, y], i) => <Pin key={i} x={x} y={y} />)}

      <path d="M20.500 799V804.500H74.500V799" fill="none" stroke="#000" strokeWidth="1.200" />
      <text x="78" y="808.500" fontSize="9.500" fill="#222" fontFamily="Liberation Sans">500m</text>
      <text x="109" y="807" fontSize="11" fontWeight="700" fill="#111" fontFamily="Liberation Sans">kakao</text>
    </svg>
  );
}

function Logo() {
  return (
    <svg viewBox="0 0 90 90" className="h-[90px] w-[90px]">
      <path d="M14 42C16 60 28 71 45 71C62 71 73 60 75 41C69 56 60 65 46 66C30 66 19 57 14 42Z" fill="#5391dc" />
      <path d="M52 70C66 67 75 57 75 41C70 53 64 60 54 64Z" fill="#79bdec" />
      <path d="M37 13C34 25 37 35 40 42C44 50 46 55 45 68H41C42 57 41 52 34 47C29 43 22 42 19 38C26 41 33 42 38 47C35 40 31 26 37 13Z" fill="#4a88d6" />
      <path d="M40 43C42 36 43 33 45 29M44 50C50 46 54 45 58 41M56 52C60 50 63 48 66 45" stroke="#7dbdf0" strokeWidth="1.200" fill="none" />
      <path d="M44 69C43 61 46 56 50 52C48 48 49 44 51 41L53 43H56L59 41C60 45 61 49 58 52C59 58 59 64 56 69Z" fill="#4f90dc" />
      <path d="M26 20C33 21 34 26 32 30C26 28 24 25 26 20ZM22 27C29 30 30 34 28 38C22 37 20 32 22 27ZM30 36C35 37 37 39 36 43C31 43 29 40 30 36Z" fill="#5a9ae0" />
      <path d="M46 19C47 26 44 30 39 30C38 25 40 21 46 19ZM51 30C53 36 49 40 45 41C43 36 46 32 51 30ZM60 34C64 38 63 43 59 43C55 40 56 37 60 34ZM67 46C66 51 63 52 60 51C61 47 63 46 67 46Z" fill="#8ccdf5" />
      <text x="12" y="76" textLength="64" lengthAdjust="spacingAndGlyphs" fontFamily="Liberation Serif" fontStyle="italic" fontWeight="700" fontSize="7.500" fill="#8fbfe8">Happy Cat House</text>
    </svg>
  );
}

const HouseIcon = () => (
  <svg viewBox="0 0 16 16" fill="currentColor" className="size-6">
    <path fillRule="evenodd" d="M2 13.5V7h1v6.5a.5.5 0 0 0 .5.5h9a.5.5 0 0 0 .5-.5V7h1v6.5a1.5 1.5 0 0 1-1.5 1.5h-9A1.5 1.5 0 0 1 2 13.5zm11-11V6l-2-2V2.5a.5.5 0 0 1 .5-.5h1a.5.5 0 0 1 .5.5z" />
    <path fillRule="evenodd" d="M7.293 1.5a1 1 0 0 1 1.414 0l6.647 6.646a.5.5 0 0 1-.708.708L8 2.207 1.354 8.854a.5.5 0 1 1-.708-.708L7.293 1.5z" />
  </svg>
);

const BuildingIcon = () => (
  <svg viewBox="0 0 16 16" fill="currentColor" className="size-6">
    <path fillRule="evenodd" d="M14.763.075A.5.5 0 0 1 15 .5v15a.5.5 0 0 1-.5.5h-3a.5.5 0 0 1-.5-.5V14h-1v1.5a.5.5 0 0 1-.5.5h-9a.5.5 0 0 1-.5-.5V10a.5.5 0 0 1 .342-.474L6 7.64V4.5a.5.5 0 0 1 .276-.447l8-4a.5.5 0 0 1 .487.022zM6 8.694L1 10.36V15h5V8.694zM7 15h2v-1.500a.5.5 0 0 1 .5-.5h2a.5.5 0 0 1 .5.5V15h2V1.309l-7 3.500V15z" />
    <path d="M2 11h1v1H2v-1zm2 0h1v1H4v-1zm-2 2h1v1H2v-1zm2 0h1v1H4v-1zm4-4h1v1H8V9zm2 0h1v1h-1V9zm-2 2h1v1H8v-1zm2 0h1v1h-1v-1zm2-2h1v1h-1V9zm0 2h1v1h-1v-1zM8 7h1v1H8V7zm2 0h1v1h-1V7zm2 0h1v1h-1V7zM8 5h1v1H8V5zm2 0h1v1h-1V5zm2 0h1v1h-1V5zm0-2h1v1h-1V3z" />
  </svg>
);

const NAV = [
  { icon: <HouseIcon />, text: "홈", active: false },
  { icon: <BsFileText className="size-6" />, text: "소개", active: false },
  { icon: <BuildingIcon />, text: "아파트 매매", active: true },
  { icon: <BsQuestionCircle className="size-6" />, text: "질의응답", active: false },
  { icon: <BsCamera className="size-6" />, text: "사진첩", active: false },
];

const ROWS = [
  ["한가람", "190,000"], ["강변", "120,000"], ["한강맨숀", "400,000"], ["LG한강자이", "345,000"], ["한가람", "184,900"],
  ["한가람", "238,000"], ["한가람", "181,500"], ["한가람", "190,000"], ["동부센트레빌", "250,000"], ["G&D용산드림", "71,000"],
];

function Select({ value }: { value: string }) {
  return (
    <div className="flex h-[35px] flex-1 items-center justify-between rounded border border-[#ced4da] pr-3 pb-px pl-[11px] text-[16px] text-[#495057]">
      <span>{value}</span>
      <svg viewBox="0 0 4 5" className="h-[10px] w-2" fill="#343a40"><path d="M2 0L0 2h4zm0 5L0 3h4z" /></svg>
    </div>
  );
}

export default function App() {
  return (
    <div className="flex h-[897px] w-full flex-col overflow-hidden bg-white font-['Open_Sans','Noto_Sans_CJK_KR',sans-serif] text-[16px] leading-6 font-[350] text-[#212529]">
      <header className="flex h-[90px] shrink-0 items-center bg-[#f8f9fb] pr-[37px] pl-[15px]">
        <Logo />
        <nav className="-mt-2 ml-4 flex items-center gap-[29.500px] text-[24px] leading-9">
          {NAV.map((n) => (
            <a key={n.text} className={n.active ? "flex items-center text-[#6db283]" : "flex items-center text-[#4e73ee]"}>
              {n.icon}
              <span>{n.text}</span>
            </a>
          ))}
        </nav>
        <div className="ml-auto flex items-center text-[#7d7d7d]">
          <div className="flex size-[38px] items-center justify-center rounded-full bg-[#4b7bf8] font-normal text-white">A</div>
          <span className="-mt-[5px] w-[219px] font-light whitespace-nowrap tracking-[-0.3px] text-[#6a6a6a]">abcdefghr(abcdef)님 환영합니다.</span>
          <a className="ml-[15px] text-[#4e73ee]">내정보보기</a>
          <a className="ml-4">로그아웃</a>
        </div>
      </header>

      <main className="flex h-[741px] shrink-0">
        <section className="flex w-[1263px] flex-col pl-[11px]">
          <div className="flex h-[70px] items-center justify-between pr-[29px] pl-[45px]">
            <div className="flex gap-8 text-[20px] font-bold text-[#d8342a]">
              <a>콜록콜록</a>
              <a>산책가자</a>
            </div>
            <div className="mt-[6px] flex h-[47px] items-stretch rounded border border-[#dfdfdf]">
              <div className="flex items-center border-r border-[#dfdfdf] pr-[18px] pl-[19px] whitespace-pre">주변 동물병원 : <b className="font-bold">30</b></div>
              <div className="flex items-center pr-[18px] pl-[19px] whitespace-pre">주변 공원 : <b className="font-bold">30</b></div>
            </div>
          </div>
          <CityMap />
        </section>

        <section className="ml-7 flex w-[612px] flex-col pt-2">
          <div className="flex gap-7">
            <Select value="서울특별시" />
            <Select value="용산구" />
            <Select value="이촌동" />
          </div>
          <div className="mt-2 grid grid-cols-[591px_21px] grid-rows-[626px_21px]">
            <div className="border-t border-[#dee2e6]">
              <div className="flex h-[47px] items-center border-b-2 border-[#212529] pb-[2px] pl-3 font-bold">
                <span className="w-[344px]">아파트</span>
                <span>거래금액</span>
              </div>
              {ROWS.map((r, i) => (
                <div key={i} className="flex h-[46px] items-center border-b border-[#dee2e6] pb-[2px] pl-3 font-['Noto_Sans_CJK_KR']">
                  <span className="w-[344px]">{r[0]}</span>
                  <span className="tracking-[-0.900px]">{r[1]}</span>
                </div>
              ))}
            </div>
            <div className="flex flex-col items-center justify-between bg-[#f0f0f0] py-[9px]">
              <svg viewBox="0 0 9 5" className="h-[5px] w-[9px]" fill="#a3a3a3"><path d="M0 5L4.500 0L9 5Z" /></svg>
              <svg viewBox="0 0 9 5" className="h-[5px] w-[9px]" fill="#a3a3a3"><path d="M0 0L4.500 5L9 0Z" /></svg>
            </div>
            <div className="flex items-center justify-between bg-[#f0f0f0] px-2">
              <svg viewBox="0 0 5 9" className="h-[9px] w-[5px]" fill="#a3a3a3"><path d="M5 0L0 4.500L5 9Z" /></svg>
              <svg viewBox="0 0 5 9" className="h-[9px] w-[5px]" fill="#a3a3a3"><path d="M0 0L5 4.500L0 9Z" /></svg>
            </div>
            <div className="bg-[#dbdbdb]" />
          </div>
        </section>
      </main>

      <footer className="flex flex-1 border-t-2 border-[#c8caca] pt-[25px] pl-[355px] text-[12.500px] font-normal tracking-[-0.500px] text-[#6c757d]">
        © Your Website 2021. All Rights Not Reserved.
      </footer>
    </div>
  );
}
